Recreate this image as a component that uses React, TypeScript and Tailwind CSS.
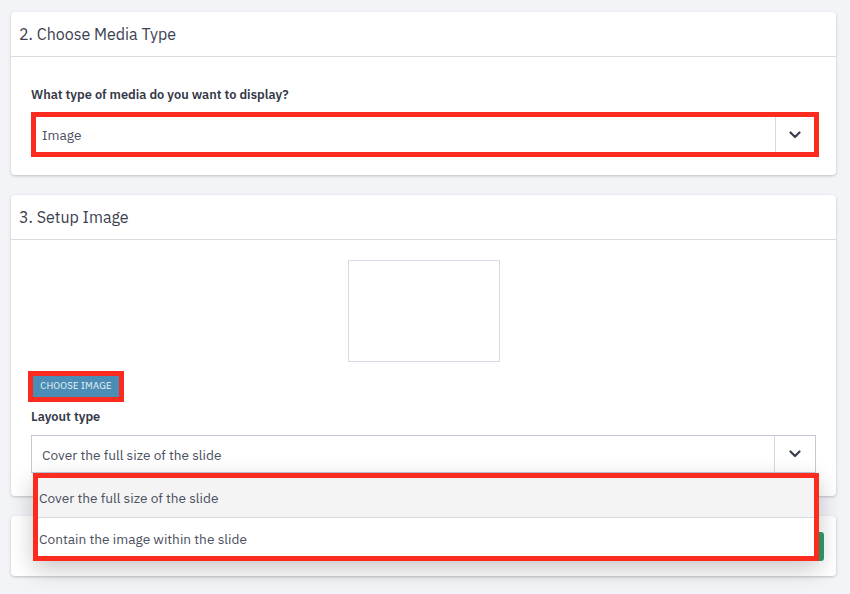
import React from "react";

const Chevron = () => (
  <svg width="12" height="8" viewBox="0 0 12 8" fill="none">
    <path d="M1.5 1.5 L6 6 L10.5 1.5" stroke="#3a3e4c" strokeWidth="2.2" strokeLinecap="round" strokeLinejoin="round" />
  </svg>
);

export default function App() {
  return (
    <div
      className="w-[850px] h-[594px] overflow-hidden bg-[#f3f4f8] pt-[12px] pl-[11px]"
      style={{ fontFamily: '"IBM Plex Sans", "Noto Sans", sans-serif' }}
    >
      {/* Card 1 */}
      <div className="w-[825px] bg-white rounded-[4px] shadow-[0_1px_3px_rgba(0,0,0,0.22)]">
        <div className="h-[45px] flex items-center px-[8px] border-b border-[#dcdbe3] text-[16px] text-[#3c4150]">
          2. Choose Media Type
        </div>
        <div className="pt-[30px] px-[20px] pb-[18px]">
          <div className="text-[12.8px] leading-[16px] font-semibold text-[#343846]">
            What type of media do you want to display?
          </div>
          <div className="mt-[9px] w-[788px] h-[45px] border-[5px] border-[#fb2c1f] bg-white flex">
            <div className="flex-1 flex items-center pl-[6px] pt-[2px] text-[13.7px] text-[#4c5060]">Image</div>
            <div className="w-[39px] border-l border-[#d8d8e0] flex items-center justify-center">
              <Chevron />
            </div>
          </div>
        </div>
      </div>

      {/* Card 2 */}
      <div className="relative z-10 mt-[20px] w-[825px] bg-white rounded-[4px] shadow-[0_1px_3px_rgba(0,0,0,0.22)]">
        <div className="h-[45px] flex items-center px-[8px] border-b border-[#dcdbe3] text-[16px] text-[#3c4150]">
          3. Setup Image
        </div>
        <div className="pt-[20px] px-[20px] pb-[23px]">
          <div className="mx-auto w-[152px] h-[102px] border border-[#dcd9e6]" />
          <div className="mt-[9px] ml-[-3px] w-[96px] h-[31px] border-[5px] border-[#fb2c1f] bg-[#4b8db4] flex items-center justify-center text-[9.5px] text-[#eef4f8] tracking-[0.2px]">
            CHOOSE IMAGE
          </div>
          <div className="mt-[7px] text-[12.8px] leading-[16px] font-semibold text-[#343846]">Layout type</div>
          <div className="relative mt-[10px] h-[38px] border border-[#c5c8d6] bg-white flex">
            <div className="flex-1 flex items-center pl-[10px] pt-[3px] text-[13.7px] text-[#4c5060]">
              Cover the full size of the slide
            </div>
            <div className="w-[41px] border-l border-[#d8d8e0] flex items-center justify-center">
              <Chevron />
            </div>
            <div className="absolute left-[1px] top-[37px] w-[786px] border-[5px] border-[#fb2c1f] bg-white shadow-[0_8px_22px_rgba(0,0,0,0.22)]">
              <div className="h-[40px] bg-[#f4f4f5] border-b border-[#d9d9e1] flex items-center pl-[1px] pt-[1px] text-[13.7px] text-[#4c5060]">
                Cover the full size of the slide
              </div>
              <div className="h-[38px] flex items-center pl-[1px] pt-[4px] text-[13.7px] text-[#4c5060]">
                Contain the image within the slide
              </div>
            </div>
          </div>
        </div>
      </div>

      {/* Card 3 */}
      <div className="mt-[20px] w-[825px] h-[60px] bg-white rounded-[4px] shadow-[0_1px_3px_rgba(0,0,0,0.22)] flex items-center justify-end pr-[12px]">
        <div className="h-[29px] px-[20px] rounded-[3px] bg-[#2e9e6b] text-white text-[13px] flex items-center">
          Save Slide
        </div>
      </div>
    </div>
  );
}
